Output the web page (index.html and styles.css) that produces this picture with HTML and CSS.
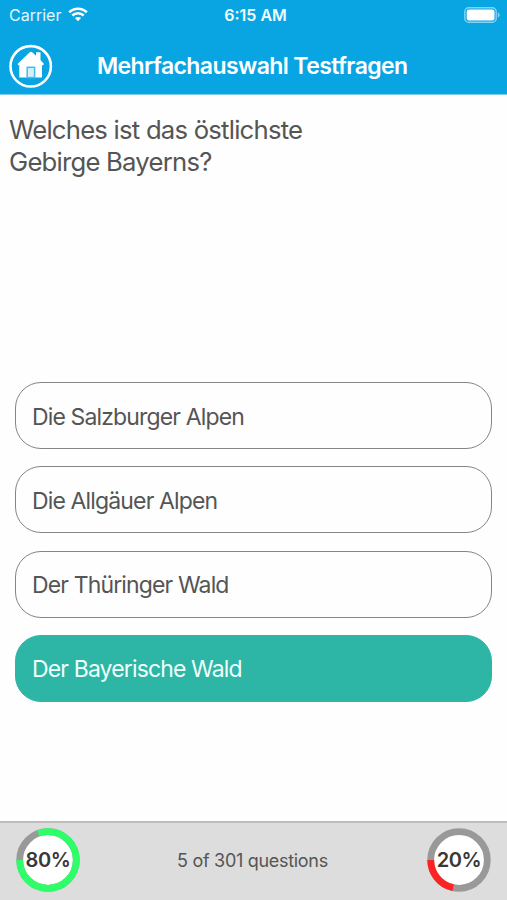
FILE: index.html
```html
<!DOCTYPE html>
<html lang="de">
<head>
    <meta charset="UTF-8">
    <meta name="viewport" content="width=device-width, initial-scale=1.0">
    <title>Mehrfachauswahl Testfragen</title>
    <link rel="stylesheet" href="styles.css">
</head>
<body>

<div class="header">
    <div class="status-bar">
        <div class="carrier">
            <span>Carrier</span>
            <svg class="wifi" width="20" height="15" viewBox="0 0 20 15">
                <path d="M1.2 5.2 C6.2 0.5 13.8 0.5 18.8 5.2" />
                <path d="M4.3 8.5 C7.5 5.5 12.5 5.5 15.7 8.5" />
                <path class="dot" d="M6.9 11.1 C8.6 9.5 11.4 9.5 13.1 11.1 L10 14.2 Z" />
            </svg>
        </div>
        <span class="time">6:15 AM</span>
        <svg class="battery" width="36" height="16" viewBox="0 0 36 16">
            <rect class="case" x="0.8" y="0.8" width="31.4" height="14.4" rx="3.8" />
            <rect class="level" x="2.7" y="2.6" width="27.8" height="10.8" rx="2" />
            <path class="tip" d="M33.8 5.5 C36.2 6.4 36.2 9.6 33.8 10.5 Z" />
        </svg>
    </div>
    <div class="nav-bar">
        <a class="home-btn" href="#">
            <svg width="44" height="44" viewBox="0 0 44 44">
                <circle cx="21.7" cy="22.3" r="20.2" />
                <path d="M8.5 20 L20.5 8.5 Q22 7.2 23.5 8.5 L27 11.8 V8.3 H31.5 V16 L35 20 L34 21.3 H33 V33.6 H10.3 V21.3 H9.5 Z" />
                <rect x="18.2" y="23.3" width="7.4" height="10.3" />
            </svg>
        </a>
        <h1>Mehrfachauswahl Testfragen</h1>
    </div>
</div>

<div class="question">Welches ist das östlichste<br>Gebirge Bayerns?</div>

<div class="answers">
    <div class="answer">Die Salzburger Alpen</div>
    <div class="answer">Die Allgäuer Alpen</div>
    <div class="answer">Der Thüringer Wald</div>
    <div class="answer correct">Der Bayerische Wald</div>
</div>

<div class="footer">
    <div class="score">
        <svg width="64" height="64" viewBox="0 0 64 64">
            <circle class="track" cx="32" cy="32" r="28.3" />
            <circle class="right" cx="32" cy="32" r="28.3" pathLength="360" />
        </svg>
        <span>80%</span>
    </div>
    <div class="progress">5 of 301 questions</div>
    <div class="score">
        <svg width="64" height="64" viewBox="0 0 64 64">
            <circle class="track" cx="32" cy="32" r="28.3" />
            <circle class="wrong" cx="32" cy="32" r="28.3" pathLength="360" />
        </svg>
        <span>20%</span>
    </div>
</div>

</body>
</html>
```

FILE: styles.css
```css
* {
    box-sizing: border-box;
}
body {
    font-family: Inter, "Liberation Sans", sans-serif;
    background-color: #fefefe;
    margin: 0;
    color: #555;
    height: 900px;
    display: flex;
    flex-direction: column;
    overflow: hidden;
}
.header {
    background: #09a5e3;
    color: white;
    height: 95px;
    border-bottom: 1px solid #7fcdef;
}
.status-bar {
    display: grid;
    grid-template-columns: 1fr auto 1fr;
    align-items: center;
    height: 29px;
    padding: 0 7px 0 9px;
    font-size: 16px;
}
.carrier {
    display: flex;
    align-items: center;
    gap: 7px;
    color: #e3f7ff;
}
.wifi {
    fill: none;
    stroke: white;
    stroke-width: 2.6;
}
.wifi .dot {
    fill: white;
    stroke: none;
}
.time {
    padding-left: 2px;
    font-weight: 600;
    color: #effbff;
}
.battery {
    justify-self: end;
}
.battery .case {
    fill: none;
    stroke: #84d3f2;
    stroke-width: 1.4;
}
.battery .level {
    fill: white;
}
.battery .tip {
    fill: #84d3f2;
}
.nav-bar {
    display: flex;
    align-items: center;
    height: 65px;
    padding: 9px 9px 0;
}
.home-btn {
    width: 44px;
    height: 44px;
    margin-right: 44px;
}
.home-btn svg {
    display: block;
}
.home-btn circle {
    fill: none;
    stroke: white;
    stroke-width: 2.6;
}
.home-btn path {
    fill: white;
}
.home-btn rect {
    fill: #d5f0fb;
    stroke: #45bbea;
    stroke-width: 1.5;
}
h1 {
    margin: 0;
    font-size: 23px;
    font-weight: 600;
    letter-spacing: -0.6px;
    white-space: nowrap;
}
.question {
    height: 287px;
    padding: 19px 9px 0;
    font-size: 25.7px;
    line-height: 32px;
    letter-spacing: -0.78px;
}
.answers {
    display: flex;
    flex-direction: column;
    gap: 17.3px;
    padding: 0 15px;
}
.answer {
    display: flex;
    align-items: center;
    height: 67px;
    padding: 2px 17px 0 16px;
    border: 1.5px solid #858585;
    border-radius: 26px;
    font-size: 23px;
    letter-spacing: -0.86px;
}
.answer.correct {
    background: #2db5a5;
    border-color: #2db5a5;
    color: #effffc;
}
.footer {
    display: flex;
    align-items: center;
    justify-content: space-between;
    height: 79px;
    margin-top: auto;
    padding: 0 16px 3px;
    background: #ddd;
    border-top: 2px solid #bdbdbd;
}
.score {
    display: grid;
    place-items: center;
    color: #383838;
    font-size: 20px;
    font-weight: 600;
    letter-spacing: -0.4px;
}
.score svg,
.score span {
    grid-area: 1 / 1;
}
.score circle {
    fill: none;
    stroke-width: 6.8;
}
.score .track {
    fill: white;
    stroke: #999;
}
/* arcs run counter-clockwise from 9 o'clock */
.score .right {
    stroke: #2dff68;
    stroke-dasharray: 290 70;
    stroke-dashoffset: 110;
}
.score .wrong {
    stroke: #fb2323;
    stroke-dasharray: 78 282;
    stroke-dashoffset: -102;
}
.progress {
    margin-right: 2px;
    font-size: 18px;
    letter-spacing: -0.3px;
}
```
